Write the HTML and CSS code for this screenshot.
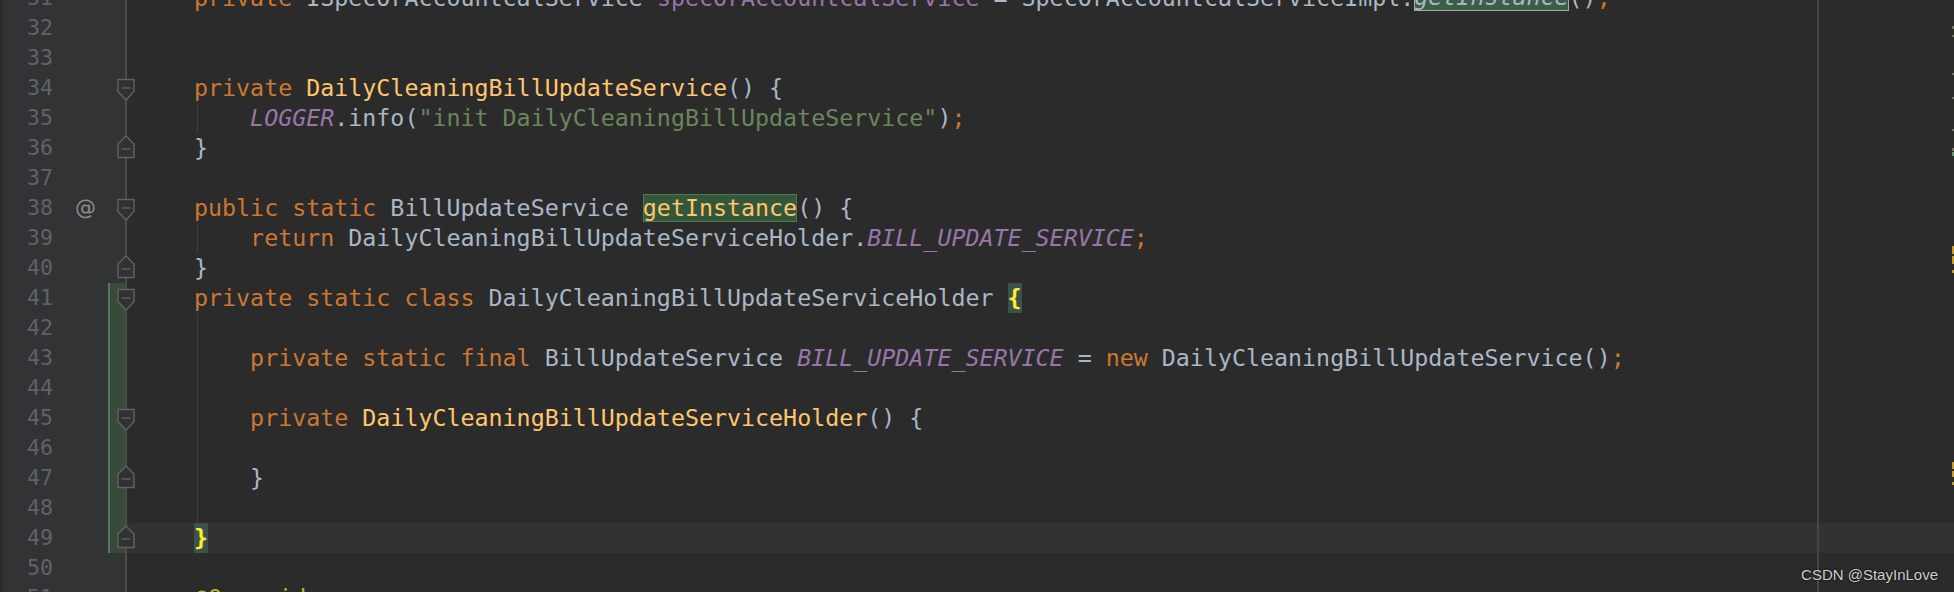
FILE: index.html
```html
<!DOCTYPE html>
<html lang="en">
<head>
    <meta charset="UTF-8">
    <title>DailyCleaningBillUpdateService.java</title>
    <link rel="stylesheet" href="styles.css">
</head>
<body>
    <div class="editor">
        <div class="lines">
            <div class="row"><div class="gut"><span class="num">31</span><span class="ann"></span><span class="chg"></span></div><div class="code"><span class="kw">private</span> ISpecOrAccountcalService <span class="fd">specOrAccountcalService</span> = SpecOrAccountcalServiceImpl.<span class="found it">getInstance</span>()<span class="kw">;</span></div></div>
            <div class="row"><div class="gut"><span class="num">32</span><span class="ann"></span><span class="chg"></span></div><div class="code"></div></div>
            <div class="row"><div class="gut"><span class="num">33</span><span class="ann"></span><span class="chg"></span></div><div class="code"></div></div>
            <div class="row"><div class="gut"><span class="num">34</span><span class="ann"></span><span class="chg"></span>
                <svg class="fold open" width="18" height="24" viewBox="0 0 18 24"><path d="M1 1.5H17V13.5L9 22L1 13.5Z"/><path d="M4.5 10H13.5"/></svg></div><div class="code"><span class="kw">private</span> <span class="fn">DailyCleaningBillUpdateService</span>() {</div></div>
            <div class="row guide"><div class="gut"><span class="num">35</span><span class="ann"></span><span class="chg"></span></div><div class="code">    <span class="st">LOGGER</span>.info(<span class="str">"init DailyCleaningBillUpdateService"</span>)<span class="kw">;</span></div></div>
            <div class="row"><div class="gut"><span class="num">36</span><span class="ann"></span><span class="chg"></span>
                <svg class="fold close" width="18" height="24" viewBox="0 0 18 24"><path d="M1 22.5H17V9L9 1L1 9Z"/><path d="M4.5 14H13.5"/></svg></div><div class="code">}</div></div>
            <div class="row"><div class="gut"><span class="num">37</span><span class="ann"></span><span class="chg"></span></div><div class="code"></div></div>
            <div class="row"><div class="gut"><span class="num">38</span><span class="ann">@</span><span class="chg"></span>
                <svg class="fold open" width="18" height="24" viewBox="0 0 18 24"><path d="M1 1.5H17V13.5L9 22L1 13.5Z"/><path d="M4.5 10H13.5"/></svg></div><div class="code"><span class="kw">public static</span> BillUpdateService <span class="use fn">getInstance</span>() {</div></div>
            <div class="row guide"><div class="gut"><span class="num">39</span><span class="ann"></span><span class="chg"></span></div><div class="code">    <span class="kw">return</span> DailyCleaningBillUpdateServiceHolder.<span class="st">BILL_UPDATE_SERVICE</span><span class="kw">;</span></div></div>
            <div class="row"><div class="gut"><span class="num">40</span><span class="ann"></span><span class="chg"></span>
                <svg class="fold close" width="18" height="24" viewBox="0 0 18 24"><path d="M1 22.5H17V9L9 1L1 9Z"/><path d="M4.5 14H13.5"/></svg></div><div class="code">}</div></div>
            <div class="row changed"><div class="gut"><span class="num">41</span><span class="ann"></span><span class="chg"></span>
                <svg class="fold open" width="18" height="24" viewBox="0 0 18 24"><path d="M1 1.5H17V13.5L9 22L1 13.5Z"/><path d="M4.5 10H13.5"/></svg></div><div class="code"><span class="kw">private static class</span> DailyCleaningBillUpdateServiceHolder <span class="brace">{</span></div></div>
            <div class="row changed guide"><div class="gut"><span class="num">42</span><span class="ann"></span><span class="chg"></span></div><div class="code"></div></div>
            <div class="row changed guide"><div class="gut"><span class="num">43</span><span class="ann"></span><span class="chg"></span></div><div class="code">    <span class="kw">private static final</span> BillUpdateService <span class="st">BILL_UPDATE_SERVICE</span> = <span class="kw">new</span> DailyCleaningBillUpdateService()<span class="kw">;</span></div></div>
            <div class="row changed guide"><div class="gut"><span class="num">44</span><span class="ann"></span><span class="chg"></span></div><div class="code"></div></div>
            <div class="row changed guide"><div class="gut"><span class="num">45</span><span class="ann"></span><span class="chg"></span>
                <svg class="fold open" width="18" height="24" viewBox="0 0 18 24"><path d="M1 1.5H17V13.5L9 22L1 13.5Z"/><path d="M4.5 10H13.5"/></svg></div><div class="code">    <span class="kw">private</span> <span class="fn">DailyCleaningBillUpdateServiceHolder</span>() {</div></div>
            <div class="row changed guide"><div class="gut"><span class="num">46</span><span class="ann"></span><span class="chg"></span></div><div class="code"></div></div>
            <div class="row changed guide"><div class="gut"><span class="num">47</span><span class="ann"></span><span class="chg"></span>
                <svg class="fold close" width="18" height="24" viewBox="0 0 18 24"><path d="M1 22.5H17V9L9 1L1 9Z"/><path d="M4.5 14H13.5"/></svg></div><div class="code">    }</div></div>
            <div class="row changed guide"><div class="gut"><span class="num">48</span><span class="ann"></span><span class="chg"></span></div><div class="code"></div></div>
            <div class="row changed current"><div class="gut"><span class="num">49</span><span class="ann"></span><span class="chg"></span>
                <svg class="fold close" width="18" height="24" viewBox="0 0 18 24"><path d="M1 22.5H17V9L9 1L1 9Z"/><path d="M4.5 14H13.5"/></svg></div><div class="code"><span class="brace">}</span></div></div>
            <div class="row"><div class="gut"><span class="num">50</span><span class="ann"></span><span class="chg"></span></div><div class="code"></div></div>
            <div class="row"><div class="gut"><span class="num">51</span><span class="ann"></span><span class="chg"></span></div><div class="code"><span class="anno">@Override</span></div></div>
        </div>

        <div class="margin-line"></div>

        <!-- error stripe on the right edge -->
        <div class="stripe">
            <i class="mark" style="top: 26px; height: 3px"></i>
            <i class="mark" style="top: 35px; height: 2px"></i>
            <i class="mark" style="top: 73px; height: 2px"></i>
            <i class="mark" style="top: 97px; height: 2px"></i>
            <i class="mark" style="top: 129px; height: 2px"></i>
            <i class="mark" style="top: 148px; height: 3px"></i>
            <i class="mark added" style="top: 152px; height: 4px"></i>
            <i class="mark warn" style="top: 246px; height: 8px"></i>
            <i class="mark warn" style="top: 256px; height: 8px"></i>
            <i class="mark warn" style="top: 270px; height: 3px"></i>
            <i class="mark warn" style="top: 462px; height: 7px"></i>
            <i class="mark warn" style="top: 471px; height: 6px"></i>
            <i class="mark warn" style="top: 482px; height: 3px"></i>
        </div>

        <div class="watermark">CSDN @StayInLove</div>
    </div>
</body>
</html>
```

FILE: styles.css
```css
body {
    margin: 0;
    background: #2b2b2b;
    overflow: hidden;
}
.editor {
    position: relative;
    height: 592px;
    overflow: hidden;
    font-family: "DejaVu Sans Mono", monospace;
}
.lines {
    margin-top: -17px;
}
.row {
    display: flex;
    height: 30px;
}
.gut {
    position: relative;
    display: flex;
    flex: none;
    width: 125px;
    background: #313335;
    border-right: 2px solid #4b4b4b;
    box-shadow: inset 3px 0 #2b2b2b;
}
.num {
    width: 56px;
    padding-right: 3px;
    box-sizing: border-box;
    text-align: right;
    font-size: 21.6px;
    line-height: 30px;
    color: #606366;
}
.ann {
    width: 52px;
    padding-left: 19px;
    box-sizing: border-box;
    font-family: "DejaVu Sans", sans-serif;
    font-size: 21px;
    line-height: 30px;
    color: #8c8c8c;
}
.chg {
    width: 17px;
}
.row.changed .chg {
    background: #384a39;
    box-shadow: inset 2px 0 #587565;
}
.fold {
    position: absolute;
    left: 117px;
    fill: #303133;
    stroke: #626262;
    stroke-width: 1.4;
}
.fold.open {
    top: 5px;
}
.fold.close {
    top: 2px;
}
.code {
    flex: 1;
    padding-left: 67px;
    font-size: 23.3px;
    line-height: 30px;
    color: #a9b7c6;
    white-space: pre;
}
.row.guide .code {
    background: linear-gradient(#404040, #404040) 70px 0 / 1px 100% no-repeat;
}
.row.current .code {
    background: #323232;
}
.kw {
    color: #cc7832;
}
.fn {
    color: #ffc66d;
}
.fd {
    color: #9876aa;
}
.st {
    color: #9876aa;
    font-style: italic;
}
.str {
    color: #6a8759;
}
.anno {
    color: #bbb529;
}
.it {
    font-style: italic;
}
.use {
    display: inline-block;
    vertical-align: top;
    margin-top: 1px;
    line-height: 28px;
    background: #34573b;
    box-shadow: inset 0 0 0 1px #4b7a50;
}
.found {
    display: inline-block;
    vertical-align: top;
    line-height: 28px;
    background: #3a5f45;
    box-shadow: inset 0 0 0 1px #a4aca5;
}
.brace {
    display: inline-block;
    vertical-align: top;
    background: #3b514d;
    color: #ffef28;
    font-weight: bold;
}
.margin-line {
    position: absolute;
    left: 1817px;
    top: 0;
    bottom: 0;
    width: 2px;
    background: #464646;
}
.stripe {
    position: absolute;
    right: 0;
    top: 0;
    bottom: 0;
    width: 2px;
}
.mark {
    position: absolute;
    left: 0;
    width: 2px;
    background: #78735e;
}
.mark.added {
    background: #5b9a6a;
}
.mark.warn {
    background: #c89b1f;
}
.watermark {
    position: absolute;
    right: 16px;
    bottom: 9px;
    font-family: "Liberation Sans", Arial, sans-serif;
    font-size: 15px;
    color: #cfcfcf;
    text-shadow: 0 0 2px #000;
}
```
